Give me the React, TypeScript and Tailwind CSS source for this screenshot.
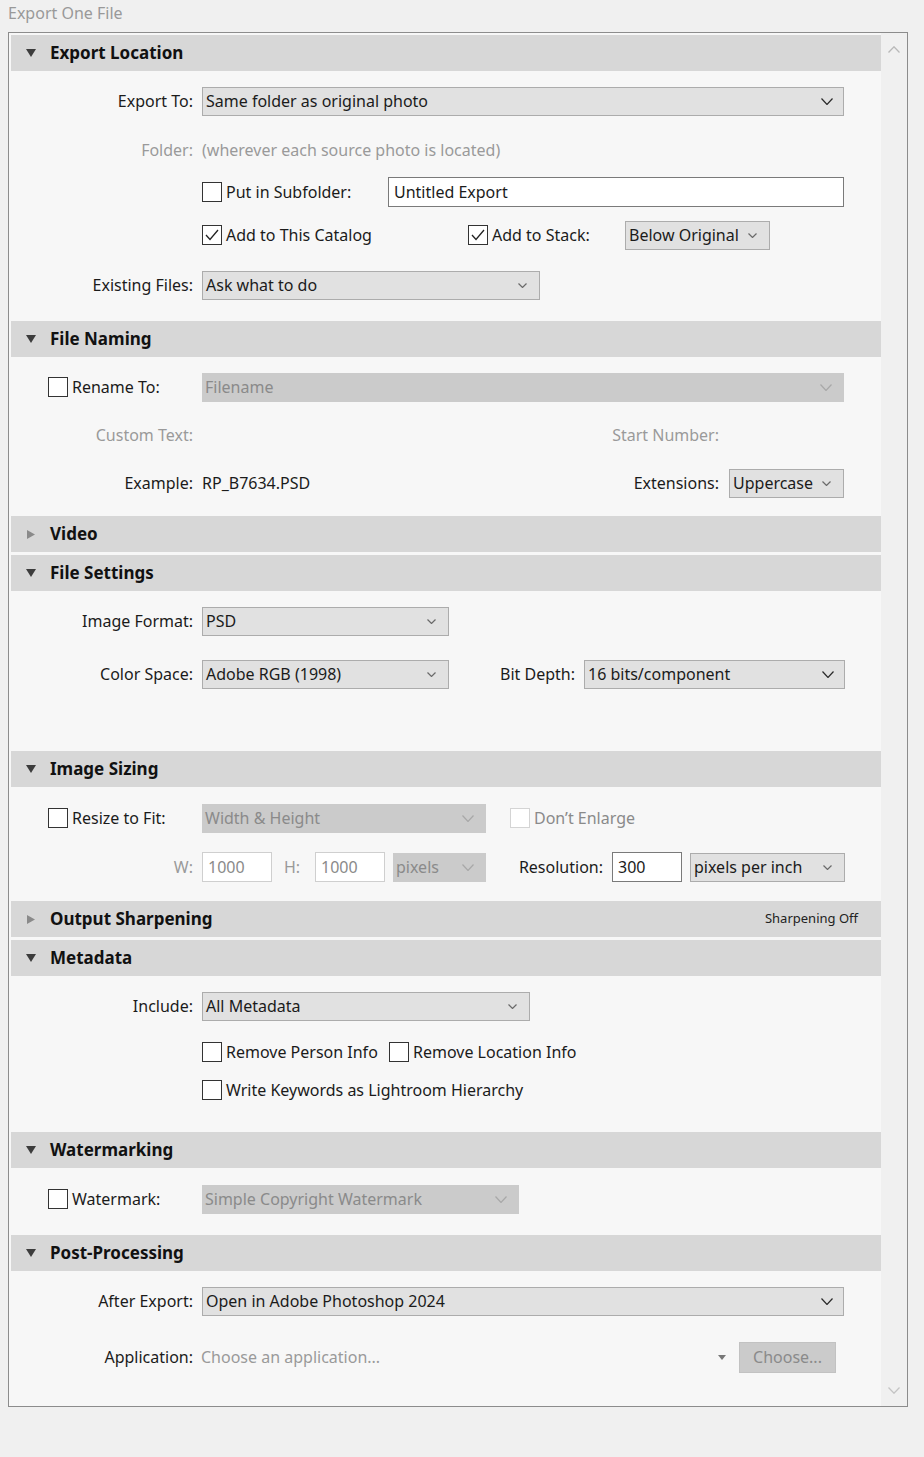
import React from 'react';

const font = "font-['Segoe_UI','Noto_Sans',sans-serif]";

function Chevron({ tone = 'dark', small = false }: { tone?: 'dark' | 'mid' | 'light'; small?: boolean }) {
    const color = tone === 'dark' ? '#2a2a2a' : tone === 'mid' ? '#6a6a6a' : '#a8a8a8';
    const w = small ? 9 : 12;
    const h = small ? 5 : 7;
    return (
        <svg width={w} height={h} viewBox={`0 0 ${w} ${h}`} fill="none" className="shrink-0">
            <polyline points={`0.5,0.5 ${w / 2},${h - 0.5} ${w - 0.5},0.5`} stroke={color} strokeWidth="1.2" />
        </svg>
    );
}

function Select({
    value,
    width,
    disabled = false,
    tone = 'mid',
    small = true,
    chevronPad = 'pr-[12px]',
}: {
    value: string;
    width: string;
    disabled?: boolean;
    tone?: 'dark' | 'mid' | 'light';
    small?: boolean;
    chevronPad?: string;
}) {
    return (
        <div
            className={`${width} h-[29px] flex items-center justify-between pl-[3px] ${chevronPad} ${
                disabled ? 'bg-[#cbcbcb] text-[#8a8a8a]' : 'bg-[#e1e1e1] border border-[#acacac] text-[#1b1b1b]'
            }`}
        >
            <span className="whitespace-nowrap leading-[22px]">{value}</span>
            <Chevron tone={disabled ? 'light' : tone} small={small} />
        </div>
    );
}

function Checkbox({ checked = false, disabled = false }: { checked?: boolean; disabled?: boolean }) {
    return (
        <div
            className={`w-[20px] h-[20px] shrink-0 bg-white border ${
                disabled ? 'border-[#d4d4d4]' : 'border-[#333333]'
            } flex items-center justify-center`}
        >
            {checked && (
                <svg width="16" height="14" viewBox="0 0 16 14" fill="none">
                    <polyline points="2,7 6,11.5 14,2" stroke="#222" strokeWidth="1.3" />
                </svg>
            )}
        </div>
    );
}

function CheckLabel({
    label,
    checked = false,
    disabled = false,
    className = '',
}: {
    label: string;
    checked?: boolean;
    disabled?: boolean;
    className?: string;
}) {
    return (
        <div className={`flex items-center gap-[4px] ${className}`}>
            <Checkbox checked={checked} disabled={disabled} />
            <span className={`whitespace-nowrap ${disabled ? 'text-[#8a8a8a]' : 'text-[#1b1b1b]'}`}>{label}</span>
        </div>
    );
}

function Label({ text, muted = false }: { text: string; muted?: boolean }) {
    return (
        <div className={`w-[182px] shrink-0 text-right mr-[9px] ${muted ? 'text-[#9a9a9a]' : 'text-[#1b1b1b]'}`}>
            {text}
        </div>
    );
}

function Row({ className = '', children }: { className?: string; children: React.ReactNode }) {
    return <div className={`h-[30px] flex items-center ${className}`}>{children}</div>;
}

function Header({ title, open = true, right }: { title: string; open?: boolean; right?: string }) {
    return (
        <div className="h-[36px] bg-[#d7d7d7] flex items-center pl-[15px] pr-[23px]">
            <div className="w-[10px] flex justify-center">
                {open ? (
                    <svg width="10" height="8" viewBox="0 0 10 8">
                        <polygon points="0,0 10,0 5,8" fill="#3c3c3c" />
                    </svg>
                ) : (
                    <svg width="8" height="9" viewBox="0 0 8 9">
                        <polygon points="0,0 8,4.5 0,9" fill="#8a8a8a" />
                    </svg>
                )}
            </div>
            <span className="ml-[14px] text-[17px] font-bold text-[#111]">{title}</span>
            {right && <span className="ml-auto text-[13px] text-[#222]">{right}</span>}
        </div>
    );
}

export default function App() {
    return (
        <div className={`w-[924px] h-[1457px] bg-[#f0f0f0] ${font} text-[16px] text-[#1b1b1b]`}>
            <div className="h-[32px] pl-[8px] pt-[1px] text-[#999999] text-[16px]">Export One File</div>
            <div className="ml-[8px] w-[900px] h-[1375px] border border-[#8c8c8c] flex">
                <div className="w-[872px] bg-[#f7f7f7] pl-[2px] pt-[2px] flex flex-col gap-[3px]">
                    {/* Export Location */}
                    <div>
                        <Header title="Export Location" />
                        <div className="pt-[15px] pb-[18px]">
                            <Row>
                                <Label text="Export To:" />
                                <Select value="Same folder as original photo" width="w-[642px]" tone="dark" small={false} chevronPad="pr-[10px]" />
                            </Row>
                            <Row className="mt-[19px]">
                                <Label text="Folder:" muted />
                                <span className="text-[#9a9a9a]">(wherever each source photo is located)</span>
                            </Row>
                            <Row className="mt-[12px]">
                                <Label text="" />
                                <CheckLabel label="Put in Subfolder:" className="w-[186px]" />
                                <div className="w-[456px] h-[30px] bg-white border border-[#7a7a7a] flex items-center pl-[5px]">
                                    Untitled Export
                                </div>
                            </Row>
                            <Row className="mt-[13px]">
                                <Label text="" />
                                <CheckLabel label="Add to This Catalog" checked className="w-[266px]" />
                                <CheckLabel label="Add to Stack:" checked className="w-[157px]" />
                                <Select value="Below Original" width="w-[145px]" />
                            </Row>
                            <Row className="mt-[20px]">
                                <Label text="Existing Files:" />
                                <Select value="Ask what to do" width="w-[338px]" />
                            </Row>
                        </div>
                    </div>

                    {/* File Naming */}
                    <div>
                        <Header title="File Naming" />
                        <div className="pt-[15px] pb-[15px]">
                            <Row>
                                <div className="w-[191px] pl-[37px] shrink-0">
                                    <CheckLabel label="Rename To:" />
                                </div>
                                <Select value="Filename" width="w-[642px]" disabled small={false} />
                            </Row>
                            <Row className="mt-[18px]">
                                <Label text="Custom Text:" muted />
                                <div className="w-[517px] text-right text-[#9a9a9a]">Start Number:</div>
                            </Row>
                            <Row className="mt-[18px]">
                                <Label text="Example:" />
                                <div className="w-[517px] flex justify-between">
                                    <span>RP_B7634.PSD</span>
                                    <span>Extensions:</span>
                                </div>
                                <div className="ml-[10px]">
                                    <Select value="Uppercase" width="w-[115px]" />
                                </div>
                            </Row>
                        </div>
                    </div>

                    {/* Video */}
                    <Header title="Video" open={false} />

                    {/* File Settings */}
                    <div>
                        <Header title="File Settings" />
                        <div className="pt-[15px] pb-[59px]">
                            <Row>
                                <Label text="Image Format:" />
                                <Select value="PSD" width="w-[247px]" />
                            </Row>
                            <Row className="mt-[23px]">
                                <Label text="Color Space:" />
                                <Select value="Adobe RGB (1998)" width="w-[247px]" />
                                <div className="w-[126px] text-right mr-[9px]">Bit Depth:</div>
                                <Select value="16 bits/component" width="w-[261px]" tone="dark" small={false} chevronPad="pr-[10px]" />
                            </Row>
                        </div>
                    </div>

                    {/* Image Sizing */}
                    <div>
                        <Header title="Image Sizing" />
                        <div className="pt-[16px] pb-[16px]">
                            <Row>
                                <div className="w-[191px] pl-[37px] shrink-0">
                                    <CheckLabel label="Resize to Fit:" />
                                </div>
                                <Select value="Width & Height" width="w-[284px]" disabled small={false} />
                                <CheckLabel label="Don’t Enlarge" disabled className="ml-[24px]" />
                            </Row>
                            <Row className="mt-[19px]">
                                <Label text="W:" muted />
                                <div className="w-[70px] h-[30px] bg-white border border-[#cfcfcf] flex items-center pl-[5px] text-[#8a8a8a]">
                                    1000
                                </div>
                                <div className="w-[43px] pl-[12px] text-[#9a9a9a]">H:</div>
                                <div className="w-[70px] h-[30px] bg-white border border-[#cfcfcf] flex items-center pl-[5px] text-[#8a8a8a]">
                                    1000
                                </div>
                                <div className="ml-[8px]">
                                    <Select value="pixels" width="w-[93px]" disabled small={false} />
                                </div>
                                <div className="w-[117px] text-right mr-[9px]">Resolution:</div>
                                <div className="w-[70px] h-[30px] bg-white border border-[#7a7a7a] flex items-center pl-[5px]">
                                    300
                                </div>
                                <div className="ml-[8px]">
                                    <Select value="pixels per inch" width="w-[155px]" />
                                </div>
                            </Row>
                        </div>
                    </div>

                    {/* Output Sharpening */}
                    <Header title="Output Sharpening" open={false} right="Sharpening Off" />

                    {/* Metadata */}
                    <div>
                        <Header title="Metadata" />
                        <div className="pt-[15px] pb-[24px]">
                            <Row>
                                <Label text="Include:" />
                                <Select value="All Metadata" width="w-[328px]" />
                            </Row>
                            <Row className="mt-[16px]">
                                <Label text="" />
                                <CheckLabel label="Remove Person Info" className="w-[187px]" />
                                <CheckLabel label="Remove Location Info" />
                            </Row>
                            <Row className="mt-[8px]">
                                <Label text="" />
                                <CheckLabel label="Write Keywords as Lightroom Hierarchy" />
                            </Row>
                        </div>
                    </div>

                    {/* Watermarking */}
                    <div>
                        <Header title="Watermarking" />
                        <div className="pt-[16px] pb-[18px]">
                            <Row>
                                <div className="w-[191px] pl-[37px] shrink-0">
                                    <CheckLabel label="Watermark:" />
                                </div>
                                <Select value="Simple Copyright Watermark" width="w-[317px]" disabled small={false} />
                            </Row>
                        </div>
                    </div>

                    {/* Post-Processing */}
                    <div>
                        <Header title="Post-Processing" />
                        <div className="pt-[15px]">
                            <Row>
                                <Label text="After Export:" />
                                <Select value="Open in Adobe Photoshop 2024" width="w-[642px]" tone="dark" small={false} chevronPad="pr-[10px]" />
                            </Row>
                            <Row className="mt-[26px]">
                                <Label text="Application:" />
                                <div className="w-[538px] flex items-center justify-between pr-[13px] -ml-[1px]">
                                    <span className="text-[#9a9a9a]">Choose an application...</span>
                                    <svg width="8" height="5" viewBox="0 0 8 5">
                                        <polygon points="0,0 8,0 4,5" fill="#777" />
                                    </svg>
                                </div>
                                <div className="w-[97px] h-[31px] bg-[#cbcbcb] border border-[#c2c2c2] flex items-center justify-center text-[#8a8a8a]">
                                    Choose...
                                </div>
                            </Row>
                        </div>
                    </div>
                </div>

                {/* Scrollbar */}
                <div className="flex-1 bg-[#f0f0f0] flex flex-col items-center justify-between pt-[13px] pb-[12px]">
                    <svg width="12" height="7" viewBox="0 0 12 7" fill="none">
                        <polyline points="0.5,6.5 6,0.8 11.5,6.5" stroke="#b8b8b8" strokeWidth="1.3" />
                    </svg>
                    <svg width="12" height="7" viewBox="0 0 12 7" fill="none">
                        <polyline points="0.5,0.5 6,6.2 11.5,0.5" stroke="#c4c4c4" strokeWidth="1.3" />
                    </svg>
                </div>
            </div>
        </div>
    );
}
